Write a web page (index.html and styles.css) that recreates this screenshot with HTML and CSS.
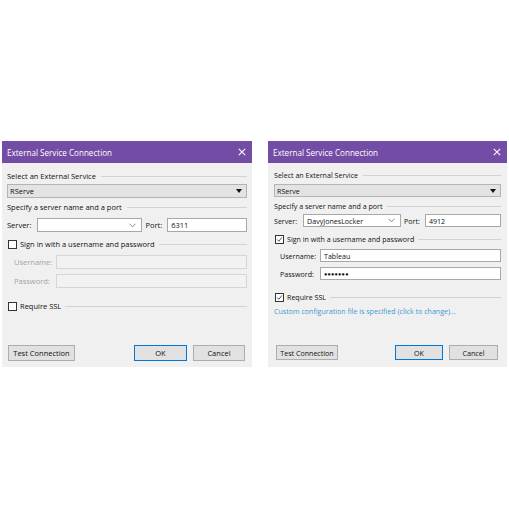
FILE: index.html
```html
<!DOCTYPE html>
<html lang="en">
<head>
<meta charset="utf-8">
<title>External Service Connection</title>
<link rel="stylesheet" href="styles.css">
</head>
<body>
<div class="stage">
  <section class="dlg dlg-a">
    <header class="titlebar">
      <span class="title">External Service Connection</span>
      <svg class="close" viewBox="0 0 10 10"><path d="M1 1L9 9M9 1L1 9"/></svg>
    </header>
    <div class="body">
      <div class="group r1"><span>Select an External Service</span><i class="rule"></i></div>
      <div class="select r2"><span>RServe</span><svg class="tri" viewBox="0 0 6 4"><path d="M0 0H6L3 4Z"/></svg></div>
      <div class="group r3"><span>Specify a server name and a port</span><i class="rule"></i></div>
      <div class="server r4">
        <span class="lbl">Server:</span>
        <div class="combo"><span></span><svg class="chev" viewBox="0 0 8 5"><path d="M0.5 0.5L4 4L7.5 0.5"/></svg></div>
        <span class="lbl port-l">Port:</span>
        <div class="input port">6311</div>
      </div>
      <div class="group check r5"><span class="box"></span><span>Sign in with a username and password</span><i class="rule"></i></div>
      <div class="field disabled r6"><span class="flbl">Username:</span><div class="input"></div></div>
      <div class="field disabled r7"><span class="flbl">Password:</span><div class="input"></div></div>
      <div class="group check r8"><span class="box"></span><span>Require SSL</span><i class="rule"></i></div>
      <div class="buttons">
        <button class="btn test">Test Connection</button>
        <button class="btn ok">OK</button>
        <button class="btn cancel">Cancel</button>
      </div>
    </div>
  </section>

  <section class="dlg dlg-b">
    <header class="titlebar">
      <span class="title">External Service Connection</span>
      <svg class="close" viewBox="0 0 10 10"><path d="M1 1L9 9M9 1L1 9"/></svg>
    </header>
    <div class="body">
      <div class="group r1"><span>Select an External Service</span><i class="rule"></i></div>
      <div class="select r2"><span>RServe</span><svg class="tri" viewBox="0 0 6 4"><path d="M0 0H6L3 4Z"/></svg></div>
      <div class="group r3"><span>Specify a server name and a port</span><i class="rule"></i></div>
      <div class="server r4">
        <span class="lbl">Server:</span>
        <div class="combo"><span>DavyJonesLocker</span><svg class="chev" viewBox="0 0 8 5"><path d="M0.5 0.5L4 4L7.5 0.5"/></svg></div>
        <span class="lbl port-l">Port:</span>
        <div class="input port">4912</div>
      </div>
      <div class="group check r5"><span class="box on"><svg viewBox="0 0 9 9"><path d="M1.5 4.5L3.6 6.8L7.6 1.8"/></svg></span><span>Sign in with a username and password</span><i class="rule"></i></div>
      <div class="field r6"><span class="flbl">Username:</span><div class="input">Tableau</div></div>
      <div class="field r7"><span class="flbl">Password:</span><div class="input dots">●●●●●●●</div></div>
      <div class="group check r8"><span class="box on"><svg viewBox="0 0 9 9"><path d="M1.5 4.5L3.6 6.8L7.6 1.8"/></svg></span><span>Require SSL</span><i class="rule"></i></div>
      <div class="link r9">Custom configuration file is specified (click to change)...</div>
      <div class="buttons">
        <button class="btn test">Test Connection</button>
        <button class="btn ok">OK</button>
        <button class="btn cancel">Cancel</button>
      </div>
    </div>
  </section>
</div>
</body>
</html>
```

FILE: styles.css
```css
* { box-sizing: border-box; }
html, body { margin: 0; padding: 0; background: #ffffff; }
body {
  font-family: "Open Sans", "Noto Sans", sans-serif;
  color: #111111;
  width: 509px;
  height: 509px;
  overflow: hidden;
}
.stage {
  display: flex;
  gap: 16px;
  padding: 141px 0 0 2px;
  align-items: flex-start;
}
.dlg {
  display: flex;
  flex-direction: column;
  height: 226px;
  background: #f0f0f0;
}
.dlg-a {
  width: 250px;
  --fs: 7.5px;
  --h: 14px;
  --pt: 8px;
  --m2: 3px; --m3: 4px; --m4: 6px; --m5: 7px; --m6: 6px; --m7: 5px; --m8: 13px;
  --pad: 5px;
  --pb: 6px;
  --btnh: 16px;
}
.dlg-b {
  width: 239px;
  --fs: 7.1px;
  --h: 13px;
  --pt: 7px;
  --m2: 4px; --m3: 4px; --m4: 3px; --m5: 7px; --m6: 5px; --m7: 5px; --m8: 12px;
  --pad: 6px;
  --pb: 7px;
  --btnh: 15px;
}
.titlebar {
  height: 22px;
  background: #734ca5;
  color: #ffffff;
  display: flex;
  align-items: center;
  justify-content: space-between;
  padding: 0 6px 0 5px;
  flex: none;
}
.title { font-size: 8.1px; }
.close { width: 8px; height: 8px; }
.close path { stroke: #ffffff; stroke-width: 1.3; fill: none; }
.body {
  flex: 1;
  display: flex;
  flex-direction: column;
  padding: var(--pt) var(--pad) var(--pb);
  font-size: var(--fs);
}
.group {
  height: 10px;
  display: flex;
  align-items: center;
  gap: 3px;
  white-space: nowrap;
}
.group .rule {
  flex: 1;
  height: 1px;
  background: #d2d2d2;
  margin-left: 2px;
}
.r2 { margin-top: var(--m2); }
.r3 { margin-top: var(--m3); }
.r4 { margin-top: var(--m4); }
.r5 { margin-top: var(--m5); }
.r6 { margin-top: var(--m6); }
.r7 { margin-top: var(--m7); }
.r8 { margin-top: var(--m8); }
.r9 { margin-top: 4px; }
.select {
  height: var(--h);
  background: #e3e3e3;
  border: 1px solid #b4b4b4;
  display: flex;
  align-items: center;
  justify-content: space-between;
  padding: 0 4px 0 2px;
}
.tri { width: 6px; height: 4px; }
.tri path { fill: #111111; }
.server {
  height: var(--h);
  display: flex;
  align-items: center;
}
.lbl { flex: none; }
.combo {
  height: 100%;
  background: #ffffff;
  border: 1px solid #a8a8a8;
  display: flex;
  align-items: center;
  justify-content: space-between;
  padding: 0 5px 0 3px;
}
.dlg-a .combo { width: 105px; margin-left: 6px; }
.dlg-b .combo { width: 98px; margin-left: 6px; }
.chev { width: 7px; height: 5px; }
.chev path { stroke: #666666; stroke-width: 0.9; fill: none; }
.port-l { margin-left: 3px; }
.input {
  height: var(--h);
  background: #ffffff;
  border: 1px solid #a8a8a8;
  display: flex;
  align-items: center;
  padding: 0 3px;
}
.port { flex: 1; margin-left: 4px; }
.dlg-a .port { margin-left: 5px; }
.dlg-b .port { margin-left: 5px; }
.field {
  display: flex;
  align-items: center;
}
.field .input { flex: 1; }
.flbl { flex: none; }
.dlg-a .flbl { width: 49px; padding-left: 7px; }
.dlg-b .flbl { width: 46px; padding-left: 6px; }
.disabled .flbl { color: #a3a3a3; }
.disabled .input { background: #f2f2f2; border-color: #d6d6d6; }
.dots { font-size: 5.5px; letter-spacing: 0.2px; color: #111111; }
.check { gap: 2px; }
.box {
  width: 9px;
  height: 9px;
  border: 1px solid #333333;
  background: #ffffff;
  margin-left: 1px;
  margin-right: 1px;
  flex: none;
  display: flex;
}
.box svg { width: 100%; height: 100%; }
.box path { stroke: #222222; stroke-width: 1; fill: none; }
.link {
  height: 10px;
  display: flex;
  align-items: center;
  color: #3d98d3;
  white-space: nowrap;
}
.buttons {
  margin-top: auto;
  display: flex;
  align-items: center;
}
.btn {
  font-family: inherit;
  font-size: var(--fs);
  color: #111111;
  height: var(--btnh);
  background: #e1e1e1;
  border: 1px solid #adadad;
  padding: 0;
  margin: 0;
}
.dlg-a .test { width: 67px; margin-left: 1px; }
.dlg-a .ok { width: 53px; margin-left: auto; }
.dlg-a .cancel { width: 52px; margin-left: 6px; margin-right: 2px; }
.dlg-b .test { width: 62px; margin-left: 2px; }
.dlg-b .ok { width: 48px; margin-left: auto; }
.dlg-b .cancel { width: 49px; margin-left: 6px; margin-right: 3px; }
.ok { border-color: #0078d7; }
```
